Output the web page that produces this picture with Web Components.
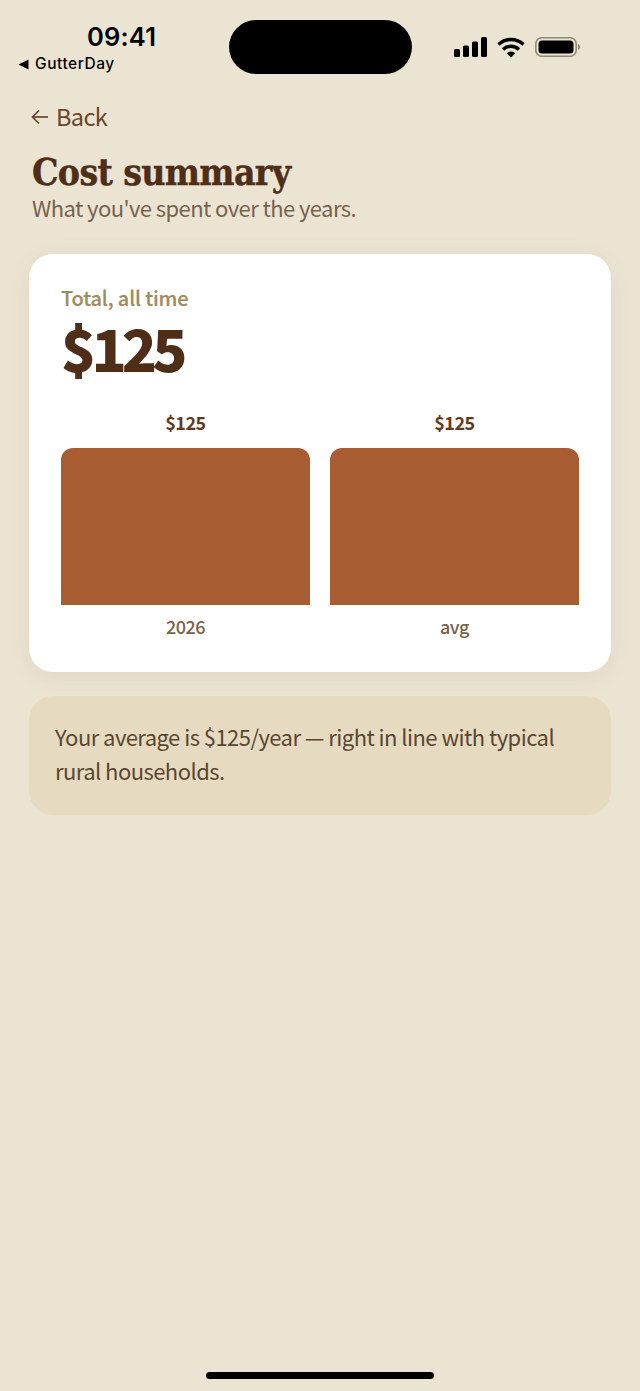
<!DOCTYPE html>
<html lang="en">
<head>
<meta charset="utf-8">
<title>Cost summary</title>
<style>
  html, body { margin: 0; height: 100%; }
  body {
    background: #ece4d3;
    font-family: "Noto Sans CJK SC", "Noto Sans", sans-serif;
  }
</style>
</head>
<body>
<app-screen>
  <status-bar time="09:41" from="GutterDay"></status-bar>
  <back-link>Back</back-link>
  <page-header heading="Cost summary">What you've spent over the years.</page-header>
  <total-card label="Total, all time" total="$125">
    <chart-bar value="$125" label="2026"></chart-bar>
    <chart-bar value="$125" label="avg"></chart-bar>
  </total-card>
  <note-card>Your average is $125/year — right in line with typical rural households.</note-card>
</app-screen>

<script>
class AppScreen extends HTMLElement {
  constructor() {
    super();
    this.attachShadow({ mode: "open" });
    this.shadowRoot.innerHTML = `
      <style>
        :host { display: flex; flex-direction: column; height: 1391px; box-sizing: border-box; overflow: hidden; }
        .home { margin-top: auto; margin-bottom: 12px; align-self: center; width: 228px; height: 7px; border-radius: 4px; background: #000; }
      </style>
      <slot></slot>
      <div class="home"></div>
    `;
  }
}

class StatusBar extends HTMLElement {
  constructor() {
    super();
    this.attachShadow({ mode: "open" });
    this.shadowRoot.innerHTML = `
      <style>
        :host { display: grid; grid-template-columns: 229px 183px 1fr; height: 99px; font-family: Inter, sans-serif; color: #000; }
        .left { display: flex; flex-direction: column; align-items: flex-start; padding: 21px 0 0 18px; }
        .time { font-size: 25.5px; font-weight: 600; line-height: 32px; letter-spacing: 0.2px; margin-left: 69px; }
        .from { display: flex; align-items: center; gap: 6px; font-size: 15.5px; font-weight: 500; line-height: 22px; letter-spacing: 0.55px; }
        .from svg { width: 11px; height: 11px; }
        .island { margin-top: 20px; height: 54px; border-radius: 27px; background: #000; }
        .right { display: flex; align-items: flex-start; padding: 36px 0 0 42px; gap: 10px; }
      </style>
      <div class="left">
        <div class="time">${this.getAttribute("time")}</div>
        <div class="from"><svg viewBox="0 0 11 11"><path d="M0.5 5.5 10.5 0.5V10.500z" fill="#000"/></svg>${this.getAttribute("from")}</div>
      </div>
      <div class="island"></div>
      <div class="right">
        <svg width="33" height="22" viewBox="0 0 33 22">
          <rect x="0" y="13" width="6" height="8" rx="1.500"/>
          <rect x="9" y="9.500" width="6" height="11.500" rx="1.500"/>
          <rect x="18" y="5.500" width="6" height="15.500" rx="1.500"/>
          <rect x="27" y="1" width="6" height="20" rx="1.500"/>
        </svg>
        <svg width="28" height="22" viewBox="0 0 28 22" fill="none" stroke="#000" stroke-width="3.400">
          <path d="M1.500 8.500a18 18 0 0 1 25 0"/>
          <path d="M6 13.500a11.500 11.500 0 0 1 16 0"/>
          <path d="M14 21.500 9.800 17.300a6 6 0 0 1 8.400 0z" fill="#000" stroke="none"/>
        </svg>
        <svg width="46" height="22" viewBox="0 0 46 22">
          <rect x="0.800" y="1.800" width="40.400" height="18.400" rx="6" fill="none" stroke="#8f8878" stroke-width="1.600"/>
          <rect x="3.500" y="4.500" width="35" height="13" rx="3.500"/>
          <path d="M43 8v6c1.500-.5 2-1.800 2-3s-.5-2.500-2-3z" fill="#8f8878"/>
        </svg>
      </div>
    `;
  }
}

class BackLink extends HTMLElement {
  constructor() {
    super();
    this.attachShadow({ mode: "open" });
    this.shadowRoot.innerHTML = `
      <style>
        :host { display: flex; align-items: center; gap: 7px; margin: 0 0 0 31px; height: 34px; color: #6b452a; font-size: 23.5px; line-height: 32px; letter-spacing: -0.6px; }
        svg { width: 18px; height: 16px; margin-top: 2px; }
      </style>
      <svg viewBox="0 0 18 16" fill="none" stroke="#6b452a" stroke-width="1.700">
        <path d="M17 8H1.500"/><path d="M8 1.500 1.500 8 8 14.500"/>
      </svg>
      <slot></slot>
    `;
  }
}

class PageHeader extends HTMLElement {
  constructor() {
    super();
    this.attachShadow({ mode: "open" });
    this.shadowRoot.innerHTML = `
      <style>
        :host { display: block; margin: 18px 0 0 32px; }
        h1 { margin: 0; font: 700 37px/42px "DejaVu Serif Condensed", "DejaVu Serif", serif; letter-spacing: -0.65px; color: #4f2e18; -webkit-text-stroke: 0.4px #4f2e18; }
        p { margin: -2px 0 0; font-size: 22px; line-height: 32px; letter-spacing: -0.57px; color: #77624c; }
      </style>
      <h1>${this.getAttribute("heading")}</h1>
      <p><slot></slot></p>
    `;
  }
}

class TotalCard extends HTMLElement {
  constructor() {
    super();
    this.attachShadow({ mode: "open" });
    this.shadowRoot.innerHTML = `
      <style>
        :host { display: block; margin: 31px 29px 0; padding: 30px 32px 32px; height: 418px; box-sizing: border-box; background: #fff; border-radius: 24px; box-shadow: 0 4px 24px rgba(90, 60, 30, 0.08); }
        .label { font-size: 20px; font-weight: 500; line-height: 28px; letter-spacing: -0.15px; color: #a08b5e; -webkit-text-stroke: 0.2px #a08b5e; }
        .total { font-size: 58px; font-weight: 900; line-height: 70px; letter-spacing: -4.9px; margin-top: 0; color: #4f2e18; }
        .bars { display: grid; grid-template-columns: 1fr 1fr; gap: 20px; margin-top: 27px; }
      </style>
      <div class="label">${this.getAttribute("label")}</div>
      <div class="total">${this.getAttribute("total")}</div>
      <div class="bars"><slot></slot></div>
    `;
  }
}

class ChartBar extends HTMLElement {
  constructor() {
    super();
    this.attachShadow({ mode: "open" });
    this.shadowRoot.innerHTML = `
      <style>
        :host { display: flex; flex-direction: column; align-items: stretch; text-align: center; }
        .value { font-size: 18px; font-weight: 700; line-height: 26px; letter-spacing: -0.5px; color: #5f3a20; }
        .bar { height: 157px; margin-top: 13px; background: #a85c32; border-radius: 12px 12px 0 0; }
        .label { font-size: 18px; font-weight: 500; line-height: 26px; letter-spacing: -0.5px; margin-top: 8px; color: #77624c; }
      </style>
      <div class="value">${this.getAttribute("value")}</div>
      <div class="bar"></div>
      <div class="label">${this.getAttribute("label")}</div>
    `;
  }
}

class NoteCard extends HTMLElement {
  constructor() {
    super();
    this.attachShadow({ mode: "open" });
    this.shadowRoot.innerHTML = `
      <style>
        :host { display: block; margin: 24px 29px 0; padding: 23px 26px 28px; background: #e6dbc1; border-radius: 24px; color: #5b4630; font-size: 22px; line-height: 34px; letter-spacing: -0.55px; }
      </style>
      <slot></slot>
    `;
  }
}

customElements.define("app-screen", AppScreen);
customElements.define("status-bar", StatusBar);
customElements.define("back-link", BackLink);
customElements.define("page-header", PageHeader);
customElements.define("total-card", TotalCard);
customElements.define("chart-bar", ChartBar);
customElements.define("note-card", NoteCard);
</script>
</body>
</html>
